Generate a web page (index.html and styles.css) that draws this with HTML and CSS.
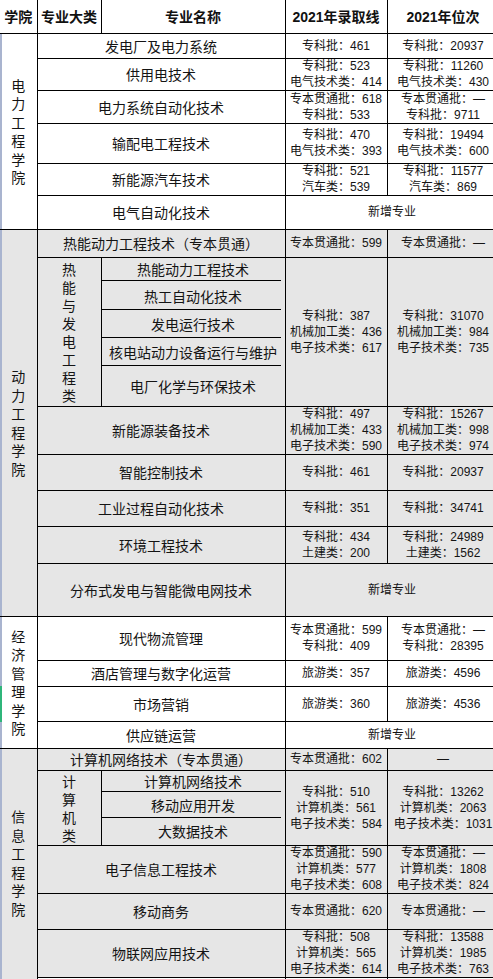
FILE: index.html
```html
<!DOCTYPE html>
<html lang="zh-CN">
<head>
<meta charset="utf-8">
<title>2021年录取线</title>
<link rel="stylesheet" href="styles.css">
</head>
<body>
<table class="sheet">
  <colgroup>
    <col class="c1"><col class="c2"><col class="c3"><col class="c4"><col class="c5">
  </colgroup>
  <thead>
    <tr class="h33">
      <th class="first">学院</th>
      <th>专业大类</th>
      <th>专业名称</th>
      <th>2021年录取线</th>
      <th>2021年位次</th>
    </tr>
  </thead>
  <tbody class="white">
    <tr class="h25">
      <td class="college" rowspan="6"><span class="vt">电力工程学院</span></td>
      <td class="name" colspan="2">发电厂及电力系统</td>
      <td class="data"><div class="ln">专科批：461</div></td>
      <td class="data"><div class="ln">专科批：20937</div></td>
    </tr>
    <tr class="h32">
      <td class="name" colspan="2">供用电技术</td>
      <td class="data"><div class="ln">专科批：523<br>电气技术类：414</div></td>
      <td class="data"><div class="ln">专科批：11260<br>电气技术类：430</div></td>
    </tr>
    <tr class="h33">
      <td class="name" colspan="2">电力系统自动化技术</td>
      <td class="data"><div class="ln">专本贯通批：618<br>专科批：533</div></td>
      <td class="data"><div class="ln">专本贯通批：—<br>专科批：9711</div></td>
    </tr>
    <tr class="h40">
      <td class="name" colspan="2">输配电工程技术</td>
      <td class="data"><div class="ln">专科批：470<br>电气技术类：393</div></td>
      <td class="data"><div class="ln">专科批：19494<br>电气技术类：600</div></td>
    </tr>
    <tr class="h32">
      <td class="name" colspan="2">新能源汽车技术</td>
      <td class="data"><div class="ln">专科批：521<br>汽车类：539</div></td>
      <td class="data"><div class="ln">专科批：11577<br>汽车类：869</div></td>
    </tr>
    <tr class="h34">
      <td class="name" colspan="2">电气自动化技术</td>
      <td class="data" colspan="2"><div class="ln">新增专业</div></td>
    </tr>
  </tbody>
  <tbody class="gray">
    <tr class="h28">
      <td class="college" rowspan="11"><span class="vt">动力工程学院</span></td>
      <td class="name" colspan="2">热能动力工程技术（专本贯通）</td>
      <td class="data"><div class="ln">专本贯通批：599</div></td>
      <td class="data"><div class="ln">专本贯通批：—</div></td>
    </tr>
    <tr class="h24">
      <td class="cat" rowspan="5"><span class="vt vt-cat">热能与发电工程类</span></td>
      <td class="name sub">热能动力工程技术</td>
      <td class="data" rowspan="5"><div class="ln">专科批：387<br>机械加工类：436<br>电子技术类：617</div></td>
      <td class="data" rowspan="5"><div class="ln">专科批：31070<br>机械加工类：984<br>电子技术类：735</div></td>
    </tr>
    <tr class="h29"><td class="name sub">热工自动化技术</td></tr>
    <tr class="h28"><td class="name sub">发电运行技术</td></tr>
    <tr class="h28"><td class="name sub">核电站动力设备运行与维护</td></tr>
    <tr class="h40"><td class="name sub last">电厂化学与环保技术</td></tr>
    <tr class="h48">
      <td class="name" colspan="2">新能源装备技术</td>
      <td class="data"><div class="ln">专科批：497<br>机械加工类：433<br>电子技术类：590</div></td>
      <td class="data"><div class="ln">专科批：15267<br>机械加工类：998<br>电子技术类：974</div></td>
    </tr>
    <tr class="h36">
      <td class="name" colspan="2">智能控制技术</td>
      <td class="data"><div class="ln">专科批：461</div></td>
      <td class="data"><div class="ln">专科批：20937</div></td>
    </tr>
    <tr class="h36">
      <td class="name" colspan="2">工业过程自动化技术</td>
      <td class="data"><div class="ln">专科批：351</div></td>
      <td class="data"><div class="ln">专科批：34741</div></td>
    </tr>
    <tr class="h37">
      <td class="name" colspan="2">环境工程技术</td>
      <td class="data"><div class="ln">专科批：434<br>土建类：200</div></td>
      <td class="data"><div class="ln">专科批：24989<br>土建类：1562</div></td>
    </tr>
    <tr class="h53">
      <td class="name" colspan="2">分布式发电与智能微电网技术</td>
      <td class="data" colspan="2"><div class="ln">新增专业</div></td>
    </tr>
  </tbody>
  <tbody class="white">
    <tr class="h44">
      <td class="college econ" rowspan="4"><span class="vt">经济管理学院</span></td>
      <td class="name" colspan="2">现代物流管理</td>
      <td class="data"><div class="ln">专本贯通批：599<br>专科批：409</div></td>
      <td class="data"><div class="ln">专本贯通批：—<br>专科批：28395</div></td>
    </tr>
    <tr class="h26">
      <td class="name" colspan="2">酒店管理与数字化运营</td>
      <td class="data"><div class="ln">旅游类：357</div></td>
      <td class="data"><div class="ln">旅游类：4596</div></td>
    </tr>
    <tr class="h35">
      <td class="name" colspan="2">市场营销</td>
      <td class="data"><div class="ln">旅游类：360</div></td>
      <td class="data"><div class="ln">旅游类：4536</div></td>
    </tr>
    <tr class="h27">
      <td class="name" colspan="2">供应链运营</td>
      <td class="data" colspan="2"><div class="ln">新增专业</div></td>
    </tr>
  </tbody>
  <tbody class="gray">
    <tr class="h22">
      <td class="college open" rowspan="7"><span class="vt">信息工程学院</span></td>
      <td class="name" colspan="2">计算机网络技术（专本贯通）</td>
      <td class="data"><div class="ln">专本贯通批：602</div></td>
      <td class="data"><div class="ln">—</div></td>
    </tr>
    <tr class="h22">
      <td class="cat" rowspan="3"><span class="vt vt-cat">计算机类</span></td>
      <td class="name sub">计算机网络技术</td>
      <td class="data" rowspan="3"><div class="ln">专科批：510<br>计算机类：561<br>电子技术类：584</div></td>
      <td class="data" rowspan="3"><div class="ln">专科批：13262<br>计算机类：2063<br>电子技术类：1031</div></td>
    </tr>
    <tr class="h26"><td class="name sub">移动应用开发</td></tr>
    <tr class="h27"><td class="name sub last">大数据技术</td></tr>
    <tr class="h48">
      <td class="name" colspan="2">电子信息工程技术</td>
      <td class="data"><div class="ln">专本贯通批：590<br>计算机类：577<br>电子技术类：608</div></td>
      <td class="data"><div class="ln">专本贯通批：—<br>计算机类：1808<br>电子技术类：824</div></td>
    </tr>
    <tr class="h36">
      <td class="name" colspan="2">移动商务</td>
      <td class="data"><div class="ln">专本贯通批：620</div></td>
      <td class="data"><div class="ln">专本贯通批：—</div></td>
    </tr>
    <tr class="h48">
      <td class="name" colspan="2">物联网应用技术</td>
      <td class="data"><div class="ln">专科批：508<br>计算机类：565<br>电子技术类：614</div></td>
      <td class="data"><div class="ln">专科批：13588<br>计算机类：1985<br>电子技术类：763</div></td>
    </tr>
  </tbody>
  <tbody class="white">
    <tr class="h12 tail">
      <td class="college tail-first"></td>
      <td class="name" colspan="2"></td>
      <td class="data"></td>
      <td class="data"></td>
    </tr>
  </tbody>
</table>
</body>
</html>
```
FILE: styles.css
```css
html, body {
  margin: 0;
  padding: 0;
  background: #ffffff;
}

body {
  width: 493px;
  height: 979px;
  overflow: hidden;
  font-family: "Liberation Sans", "Noto Sans CJK SC", sans-serif;
  color: #141414;
}

.sheet {
  border-collapse: collapse;
  table-layout: fixed;
  width: 499px;
  border: none;
}

.c1 { width: 37px; }
.c2 { width: 64px; }
.c3 { width: 184px; }
.c4 { width: 102px; }
.c5 { width: 112px; }

.sheet th,
.sheet td {
  border: 1px solid #000;
  padding: 0;
  text-align: center;
  vertical-align: middle;
  white-space: nowrap;
  overflow: hidden;
}

.sheet th {
  border-top: none;
  font-size: 14px;
  font-weight: bold;
  color: #111;
  background: #fff;
}

.sheet th.first,
.sheet td.college {
  border-left: none;
}

.white td { background-color: #ffffff; }
.gray td { background-color: #e6e6e6; }

.college {
  background-image: linear-gradient(#a9b4cf, #a9b4cf);
  background-size: 2px 100%;
  background-repeat: no-repeat;
  background-position: left top;
}

.college.econ {
  background-image:
    linear-gradient(to bottom, transparent 69px, #2fb57a 69px, #2fb57a 105px, transparent 105px),
    linear-gradient(#a9b4cf, #a9b4cf);
  background-size: 2px 100%, 2px 100%;
  background-repeat: no-repeat, no-repeat;
  background-position: left top, left top;
}

.college.open { border-bottom: none; }

.tail td { border-bottom: none; background-color: #fff; }
.tail td.tail-first {
  border-top: none;
  background-color: #e6e6e6;
}

.vt {
  display: block;
  width: 14px;
  margin: 0 auto;
  font-size: 14px;
  line-height: 18.5px;
  white-space: normal;
  word-break: break-all;
  font-family: "Noto Sans CJK SC", sans-serif;
}

.vt-cat { line-height: 18px; }

.name {
  font-family: "Noto Sans CJK SC", sans-serif;
  font-size: 14px;
  line-height: 18px;
}

.name.sub {
  border-top: none;
  border-bottom: none;
  background-image: linear-gradient(#000, #000);
  background-size: calc(100% - 4px) 1px;
  background-repeat: no-repeat;
  background-position: left bottom;
}

.name.sub.last {
  background-image: none;
}

.data {
  font-size: 12px;
  line-height: 16px;
}

.ln {
  margin: -5px 0;
}

.h12 { height: 12px; }
.h22 { height: 22px; }
.h24 { height: 24px; }
.h25 { height: 25px; }
.h26 { height: 26px; }
.h27 { height: 27px; }
.h28 { height: 28px; }
.h29 { height: 29px; }
.h32 { height: 32px; }
.h33 { height: 33px; }
.h34 { height: 34px; }
.h35 { height: 35px; }
.h36 { height: 36px; }
.h37 { height: 37px; }
.h40 { height: 40px; }
.h44 { height: 44px; }
.h48 { height: 48px; }
.h53 { height: 53px; }
```
